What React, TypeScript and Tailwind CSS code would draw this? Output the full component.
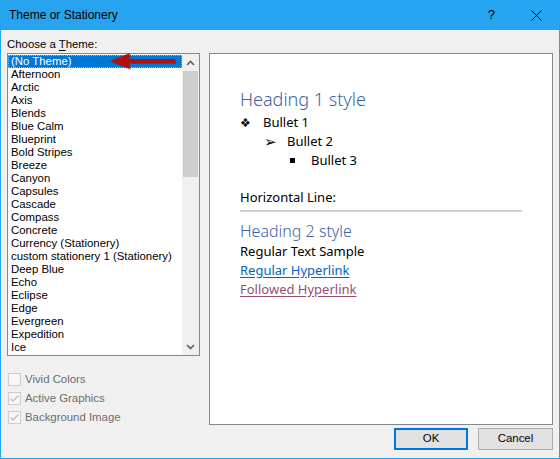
import React from "react";

const themes = [
  "(No Theme)",
  "Afternoon",
  "Arctic",
  "Axis",
  "Blends",
  "Blue Calm",
  "Blueprint",
  "Bold Stripes",
  "Breeze",
  "Canyon",
  "Capsules",
  "Cascade",
  "Compass",
  "Concrete",
  "Currency (Stationery)",
  "custom stationery 1 (Stationery)",
  "Deep Blue",
  "Echo",
  "Eclipse",
  "Edge",
  "Evergreen",
  "Expedition",
  "Ice",
];

const ui = { fontFamily: '"Liberation Sans", Arial, sans-serif' };
const doc = { fontFamily: '"Noto Sans", "Open Sans", sans-serif' };

function Check({ label, checked }: { label: string; checked?: boolean }) {
  return (
    <div className="flex items-center h-[19px] gap-[4px] text-[11.4px] text-[#6d6d6d]">
      <div className="w-[13px] h-[13px] border border-[#cccccc] bg-[#f7f7f7] flex items-center justify-center">
        {checked && (
          <svg width="11" height="11" viewBox="0 0 11 11">
            <path d="M1.5 5.5 L4 8 L9.5 2.5" fill="none" stroke="#bcbcbc" strokeWidth="1.3" />
          </svg>
        )}
      </div>
      <span>{label}</span>
    </div>
  );
}

export default function App() {
  return (
    <div className="w-[560px] h-[459px] bg-[#26a4ef] flex flex-col" style={ui}>
      <div className="h-[30px] flex items-center pl-[9px] pr-[18px] text-[12px] text-black shrink-0">
        <span className="flex-1">Theme or Stationery</span>
        <span className="text-[13px] mr-[36px]">?</span>
        <svg width="11" height="11" viewBox="0 0 11 11">
          <path d="M0.5 0.5 L10.5 10.5 M10.5 0.5 L0.5 10.5" stroke="#000" strokeWidth="1" />
        </svg>
      </div>

      <div className="flex-1 mx-[1px] mb-[1px] bg-[#f0f0f0] flex pl-[6px]">
        {/* left column */}
        <div className="w-[193px] flex flex-col">
          <div className="pt-[6px] h-[23px] leading-[17px] text-[11.4px] text-black">
            Choose a <span className="underline underline-offset-2">T</span>heme:
          </div>
          <div className="relative h-[303px] border border-[#828790] bg-white flex">
            <div className="flex-1 pt-[1px] overflow-hidden">
              {themes.map((t, i) => (
                <div
                  key={t}
                  className={
                    i === 0
                      ? "h-[13px] leading-[13px] text-[11.4px] pl-[3px] bg-[#0078d7] text-white outline outline-1 outline-dotted outline-[#f5a623] -outline-offset-1"
                      : "h-[13px] leading-[13px] text-[11.4px] pl-[3px] text-black whitespace-nowrap"
                  }
                >
                  {t}
                </div>
              ))}
            </div>
            <div className="w-[17px] bg-[#f0f0f0] flex flex-col">
              <div className="h-[17px] flex items-center justify-center">
                <svg width="9" height="6" viewBox="0 0 9 6">
                  <path d="M1 5 L4.5 1.5 L8 5" fill="none" stroke="#606060" strokeWidth="1.6" />
                </svg>
              </div>
              <div className="mx-[1px] h-[106px] bg-[#cdcdcd]" />
              <div className="flex-1" />
              <div className="h-[17px] flex items-center justify-center">
                <svg width="9" height="6" viewBox="0 0 9 6">
                  <path d="M1 1 L4.5 4.5 L8 1" fill="none" stroke="#606060" strokeWidth="1.6" />
                </svg>
              </div>
            </div>
            <svg
              className="absolute left-[102px] top-[-2px]"
              width="70"
              height="18"
              viewBox="0 0 70 18"
            >
              <path d="M0 9 L20 1 L19 7 L65 7 L65 11 L19 11 L20 17 Z" fill="#7a0a0a" transform="translate(1 1)" opacity="0.35" />
              <path d="M0 9 L20 1 L19 7 L65 7 L65 11 L19 11 L20 17 Z" fill="#b01010" />
            </svg>
          </div>
          <div className="mt-[14px] pl-[1px] flex flex-col">
            <Check label="Vivid Colors" />
            <Check label="Active Graphics" checked />
            <Check label="Background Image" checked />
          </div>
        </div>

        {/* right column */}
        <div className="ml-[9px] w-[344px] flex flex-col pt-[23px]">
          <div className="h-[372px] border border-[#828790] bg-white pl-[30px] pt-[33px]" style={doc}>
            <div className="h-[24px] leading-[24px] text-[18px] font-light text-[#3d64a6]">Heading 1 style</div>
            <div className="mt-[1.5px] text-[13px] text-black">
              <div className="h-[19px] leading-[19px] flex">
                <span className="w-[23px] text-[12px]">❖</span>
                <span>Bullet 1</span>
              </div>
              <div className="h-[19px] leading-[19px] flex pl-[24px]">
                <span className="w-[23px] text-[15px]">➢</span>
                <span>Bullet 2</span>
              </div>
              <div className="h-[19px] leading-[19px] flex pl-[49px] items-center">
                <span className="w-[22px] flex pl-[1px]">
                  <span className="w-[5px] h-[5px] bg-black" />
                </span>
                <span>Bullet 3</span>
              </div>
              <div className="mt-[18px] h-[19px] leading-[19px]">Horizontal Line:</div>
            </div>
            <div className="mt-[3px] w-[282px] h-[2px] bg-[#c4c4c4] border-b border-[#dcdcdc]" />
            <div className="mt-[8px] h-[22px] leading-[22px] text-[16px] font-light text-[#3d64a6]">Heading 2 style</div>
            <div className="text-[13px]">
              <div className="h-[19px] leading-[19px] text-black">Regular Text Sample</div>
              <div className="h-[19px] leading-[19px] text-[#0563c1] underline underline-offset-2">Regular Hyperlink</div>
              <div className="h-[19px] leading-[19px] text-[#954f72] underline underline-offset-2">Followed Hyperlink</div>
            </div>
          </div>
          <div className="mt-[3px] flex justify-end gap-[10px] text-[11.4px] text-black">
            <button className="w-[74px] h-[22px] bg-[#e1e1e1] border-2 border-[#0078d7]">OK</button>
            <button className="w-[75px] h-[22px] bg-[#e1e1e1] border border-[#adadad]">Cancel</button>
          </div>
        </div>
      </div>
    </div>
  );
}
